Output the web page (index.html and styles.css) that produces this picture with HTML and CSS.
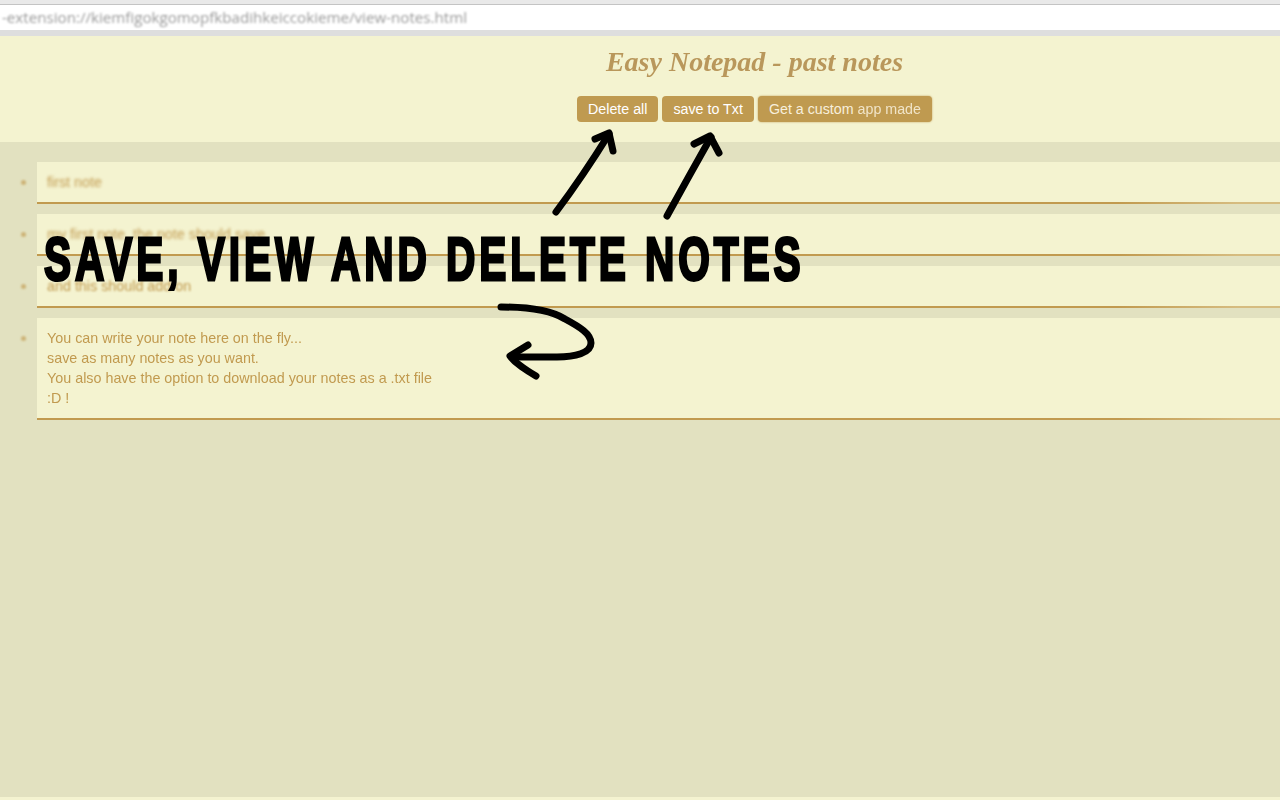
FILE: index.html
```html
<!DOCTYPE html>
<html lang="en">
<head>
<meta charset="utf-8">
<title>Easy Notepad - past notes</title>
<link rel="stylesheet" href="styles.css">
</head>
<body>
<div class="urlbar"><span class="url">-extension://kiemfigokgomopfkbadihkeiccokieme/view-notes.html</span></div>
<header class="top">
  <h1 class="title">Easy Notepad - past notes</h1>
  <div class="actions">
    <button class="btn">Delete all</button>
    <button class="btn">save to Txt</button>
    <button class="btn btn-soft">Get a custom <span class="soft">app made</span></button>
  </div>
</header>
<ul class="notes">
  <li class="note"><i class="dot"></i><div class="card"><span class="blur-strong">first note</span></div></li>
  <li class="note"><i class="dot"></i><div class="card"><span class="blur-strong">my first note, the note should save</span></div></li>
  <li class="note"><i class="dot"></i><div class="card"><span class="blur-mid">and this should add on</span></div></li>
  <li class="note"><i class="dot"></i><div class="card"><span class="blur-light">You can write your note here on the fly...</span><span class="blur-light">save as many notes as you want.</span><span class="blur-faint">You also have the option to download your notes as a .txt file</span><span class="blur-faint">:D !</span></div></li>
</ul>
<div class="bottom-strip"></div>
<div class="headline">SAVE, VIEW AND DELETE NOTES</div>
<svg class="arrows" width="1280" height="800" viewBox="0 0 1280 800" fill="none" stroke="#000" stroke-width="7" stroke-linecap="round" stroke-linejoin="round" aria-hidden="true">
  <path d="M556 212 Q583 176 609 134"/>
  <path d="M595 139 L609 133 L613 151"/>
  <path d="M667 216 Q689 176 711 137"/>
  <path d="M694 144 L710 136 L719 153"/>
  <path d="M501 307 C530 307 552 311 565 319 C580 327 591 334 591 343 C591 353 575 357 557 357 L513 357"/>
  <path d="M528 345 L510 356 C516 364 526 370 536 376"/>
</svg>
</body>
</html>
```
FILE: styles.css
```css
html, body {
  margin: 0;
  height: 800px;
  overflow: hidden;
}
body {
  position: relative;
  background: #e2e1c0;
  font-family: "Liberation Sans", Arial, sans-serif;
  display: flex;
  flex-direction: column;
}
.urlbar {
  height: 26px;
  flex: none;
  background: #fff;
  border-top: 4px solid #e9e9e9;
  border-bottom: 6px solid #dedede;
  box-shadow: inset 0 1px 0 #c4c4c4;
  display: flex;
  align-items: center;
  padding-left: 2px;
}
.url {
  font-family: "Open Sans", sans-serif;
  font-size: 15.15px;
  color: #999;
  filter: blur(0.9px);
  white-space: nowrap;
}
.top {
  height: 106px;
  flex: none;
  background: #f4f3d0;
  display: flex;
  flex-direction: column;
  align-items: center;
  padding-left: 229px;
  box-sizing: border-box;
}
.title {
  margin: 8px 0 0;
  height: 52px;
  line-height: 36px;
  font-family: "Liberation Serif", serif;
  font-style: italic;
  font-weight: 700;
  font-size: 28px;
  color: #b9975b;
  filter: blur(0.6px);
  white-space: nowrap;
}
.actions {
  display: flex;
  gap: 4px;
}
.btn {
  height: 26px;
  padding: 0 11px;
  border: 0;
  border-radius: 4px;
  background: #bf9a50;
  color: #fff;
  font-family: "Liberation Sans", Arial, sans-serif;
  font-size: 14.25px;
}
.btn-soft {
  box-shadow: 0 0 2px #bf9a50;
  color: #f7efdc;
}
.soft {
  filter: blur(0.7px);
  display: inline-block;
  color: #f0e4c8;
}
.notes {
  list-style: none;
  margin: 20px 0 0;
  padding: 0;
  display: flex;
  flex-direction: column;
  gap: 10px;
  flex: 1;
}
.note {
  display: flex;
  align-items: flex-start;
}
.dot {
  flex: none;
  width: 5px;
  height: 5px;
  margin: 18px 11px 0 21px;
  border-radius: 50%;
  background: #c19a4f;
  opacity: 0.65;
  filter: blur(0.8px);
}
.card {
  flex: 1;
  background: #f4f3d0;
  border-bottom: 2px solid #c19a4f;
  border-image: linear-gradient(90deg, #c19a4f 0, #c19a4f 1080px, #d6bc80 1200px, #d6bc80 100%) 1;
  padding: 10px;
  line-height: 20px;
  font-size: 14.33px;
  color: #c19a4f;
}
.blur-strong { filter: blur(1.4px); display: block; }
.blur-mid { filter: blur(1px); display: block; }
.blur-light { filter: blur(0.7px); display: block; }
.blur-faint { filter: blur(0.3px); display: block; }
.bottom-strip {
  height: 3px;
  flex: none;
  background: #f4f3d0;
}
.headline {
  position: absolute;
  left: 44px;
  top: 226px;
  font-family: "Liberation Sans", sans-serif;
  font-weight: 700;
  font-size: 62px;
  line-height: 66px;
  letter-spacing: 6px;
  color: #000;
  -webkit-text-stroke: 3px #000;
  white-space: nowrap;
  transform: scaleX(0.655);
  transform-origin: left center;
}
.arrows {
  position: absolute;
  left: 0;
  top: 0;
  pointer-events: none;
}
```
